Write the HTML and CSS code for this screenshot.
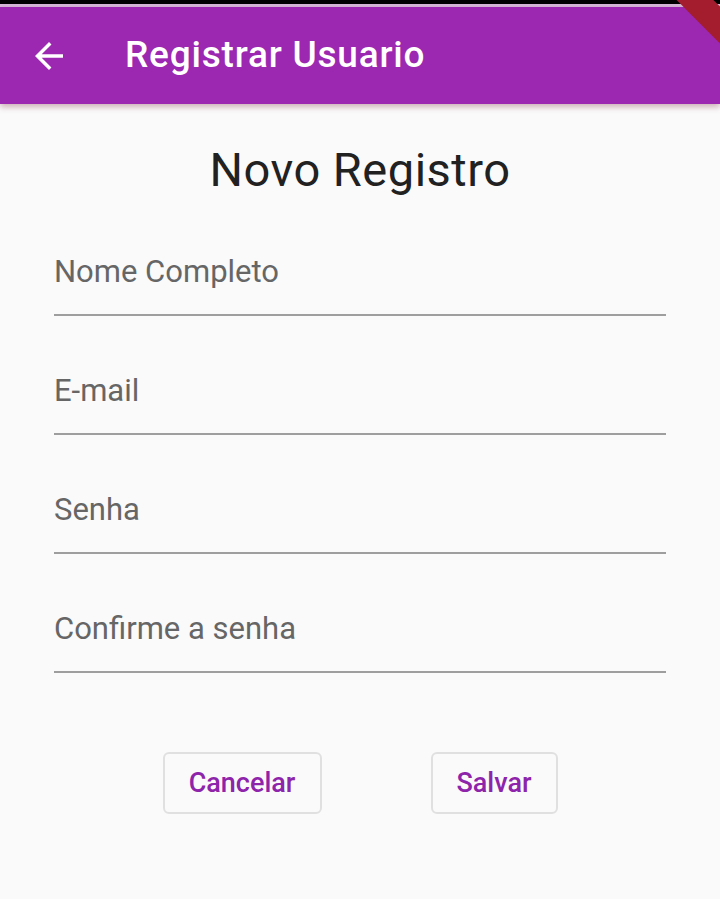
FILE: index.html
```html
<!DOCTYPE html>
<html lang="pt">
<head>
<meta charset="utf-8">
<link rel="stylesheet" href="styles.css">
</head>
<body>
<div class="statusbar"></div>
<header class="appbar">
  <svg class="back" width="42" height="42" viewBox="0 0 24 24"><path d="M20 11H7.83l5.59-5.59L12 4l-8 8 8 8 1.41-1.41L7.83 13H20v-2z" fill="#fff"/></svg>
  <h1 class="title">Registrar Usuario</h1>
</header>
<div class="banner"></div>
<main class="content">
  <h2 class="heading">Novo Registro</h2>
  <div class="field"><span class="label">Nome Completo</span></div>
  <div class="field"><span class="label">E-mail</span></div>
  <div class="field"><span class="label">Senha</span></div>
  <div class="field"><span class="label">Confirme a senha</span></div>
  <div class="actions">
    <button class="btn btn-cancel">Cancelar</button>
    <button class="btn btn-save">Salvar</button>
  </div>
</main>
</body>
</html>
```
FILE: styles.css
```css
html, body {
  margin: 0;
  padding: 0;
  background: #fafafa;
  font-family: Roboto, "Noto Sans", sans-serif;
  width: 720px;
  height: 899px;
  overflow: hidden;
}
body {
  position: relative;
}
.statusbar {
  height: 4px;
  background: #000;
  border-bottom: 3px solid #d6b8d8;
}
.appbar {
  height: 97px;
  background: #9c27b0;
  display: flex;
  align-items: center;
  box-shadow: 0 3px 6px rgba(120, 40, 60, 0.35);
}
.back {
  margin-left: 28px;
  margin-top: 1px;
  flex: none;
}
.title {
  margin: -1px 0 0 55px;
  color: #fff;
  font-size: 37px;
  font-weight: 500;
  line-height: 44px;
  letter-spacing: 0.8px;
}
.banner {
  position: absolute;
  left: 640px;
  top: -8px;
  width: 120px;
  height: 26px;
  background: #a31d2f;
  transform: rotate(45deg);
}
.content {
  padding: 0 54px;
  display: flex;
  flex-direction: column;
}
.heading {
  margin: 38px 0 27px;
  text-align: center;
  font-size: 47px;
  font-weight: 400;
  line-height: 55px;
  letter-spacing: 0.5px;
  color: #212121;
}
.field {
  height: 92px;
  border-bottom: 2px solid #9e9e9e;
  margin-bottom: 27px;
  display: flex;
  align-items: flex-end;
  box-sizing: border-box;
  padding-bottom: 24px;
}
.label {
  font-size: 31px;
  line-height: 36px;
  color: #666;
}
.actions {
  display: flex;
  justify-content: center;
  gap: 109px;
  margin-top: 52px;
}
.btn {
  font-family: Roboto, sans-serif;
  font-size: 27px;
  font-weight: 500;
  color: #8e24aa;
  background: #fafafa;
  border: 2px solid #e0e0e0;
  border-radius: 6px;
  height: 62px;
  padding: 0;
}
.btn-cancel { width: 159px; }
.btn-save { width: 127px; }
```
